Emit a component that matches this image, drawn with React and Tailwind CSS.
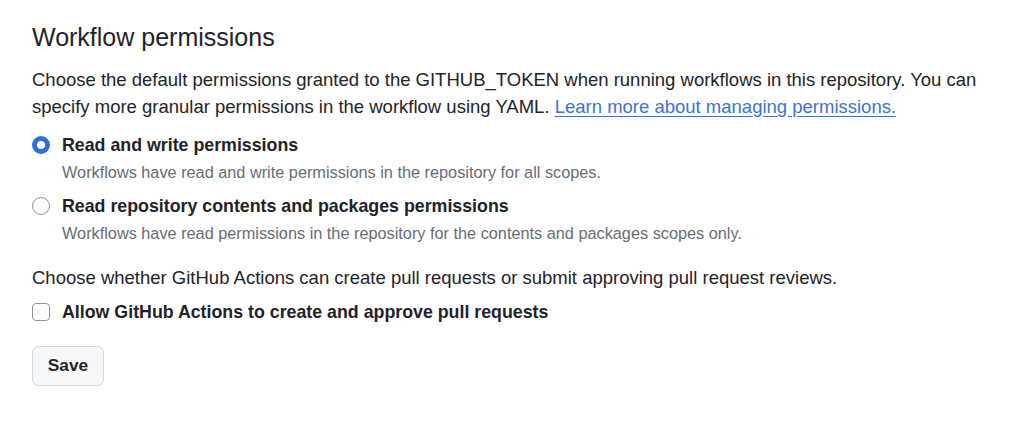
import React, { useState } from 'react';

const App = () => {
  const [perm, setPerm] = useState('write');
  const [allowPr, setAllowPr] = useState(false);

  return (
    <div className="w-[1024px] h-[435px] bg-white text-[#1f2328] font-['Liberation_Sans',Arial,sans-serif] pl-[32px] pt-[22px]">
      <h2 className="text-[25px] leading-[30px] font-normal">Workflow permissions</h2>

      <p className="mt-[14px] text-[18.5px] leading-[27px] w-[970px]">
        Choose the default permissions granted to the GITHUB_TOKEN when running workflows in this repository. You can
        <br />
        specify more granular permissions in the workflow using YAML.{' '}
        <a href="#" className="text-[#3b74d4] underline underline-offset-[3px]">Learn more about managing permissions.</a>
      </p>

      {/* Opciones de permisos */}
      <div className="mt-[11px] flex flex-col gap-[7px]">
        <label className="flex items-start gap-[12px] cursor-pointer" onClick={() => setPerm('write')}>
          <span className={`mt-[5px] w-[18px] h-[18px] rounded-full shrink-0 ${perm === 'write' ? 'border-[5px] border-[#2f6fdb]' : 'border border-[#8c959f]'}`}></span>
          <span className="flex flex-col">
            <span className="text-[17.8px] leading-[28px] font-bold">Read and write permissions</span>
            <span className="text-[16.3px] leading-[26px] text-[#656d76]">Workflows have read and write permissions in the repository for all scopes.</span>
          </span>
        </label>
        <label className="flex items-start gap-[12px] cursor-pointer" onClick={() => setPerm('read')}>
          <span className={`mt-[5px] w-[18px] h-[18px] rounded-full shrink-0 ${perm === 'read' ? 'border-[5px] border-[#2f6fdb]' : 'border border-[#8c959f]'}`}></span>
          <span className="flex flex-col">
            <span className="text-[17.8px] leading-[28px] font-bold">Read repository contents and packages permissions</span>
            <span className="text-[16.3px] leading-[26px] text-[#656d76]">Workflows have read permissions in the repository for the contents and packages scopes only.</span>
          </span>
        </label>
      </div>

      <p className="mt-[18px] text-[18.5px] leading-[27px]">
        Choose whether GitHub Actions can create pull requests or submit approving pull request reviews.
      </p>

      <label className="mt-[7px] flex items-center gap-[12px] cursor-pointer" onClick={() => setAllowPr(!allowPr)}>
        <span className={`w-[18px] h-[18px] rounded-[4px] border shrink-0 ${allowPr ? 'bg-[#2f6fdb] border-[#2f6fdb]' : 'border-[#8c959f] bg-white'}`}></span>
        <span className="text-[17.8px] leading-[28px] font-bold">Allow GitHub Actions to create and approve pull requests</span>
      </label>

      <button className="mt-[20px] h-[40px] w-[72px] rounded-[7px] border border-[#d0d7de] bg-[#f6f8fa] text-[17.3px] font-bold text-[#1f2328]">
        Save
      </button>
    </div>
  );
};

export default App;
